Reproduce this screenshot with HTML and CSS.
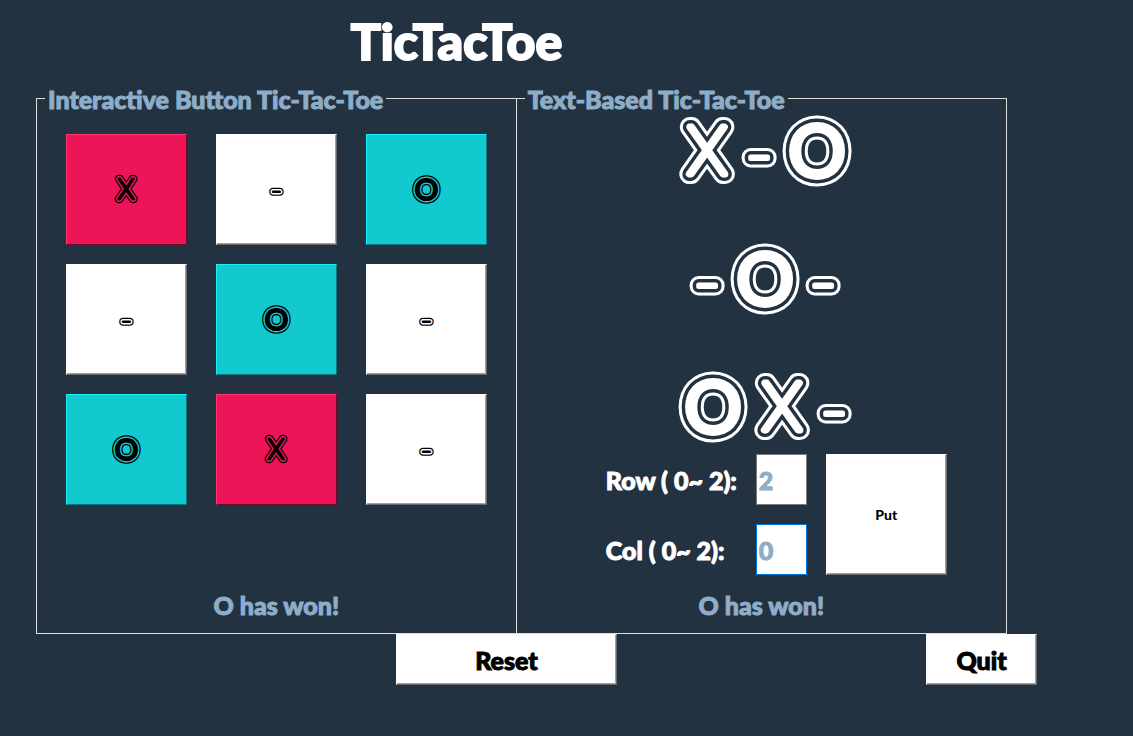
FILE: index.html
```html
<!DOCTYPE html>
<html lang="en">
<head>
<meta charset="utf-8">
<title>TicTacToe</title>
<link rel="stylesheet" href="styles.css">
</head>
<body>
<svg class="mark-defs" aria-hidden="true">
  <defs>
    <g id="inner-x"><text class="gap" x="29" y="58">X</text><text class="core" x="29" y="58">X</text></g>
    <g id="inner-o"><text class="gap" x="35" y="61">O</text><text class="core" x="35" y="61">O</text></g>
    <g id="inner-dash"><text class="gap" x="18" y="61">-</text><text class="core" x="18" y="61">-</text></g>
  </defs>
</svg>
<main class="page">
  <h1 class="title">TicTacToe</h1>
  <div class="boards">
    <fieldset class="frame frame-buttons">
      <legend>Interactive Button Tic-Tac-Toe</legend>
      <div class="grid">
        <button class="cell cell-x" type="button"><svg class="mark" viewBox="0 0 58 70"><text class="mark-x" x="29" y="58">X</text><use href="#inner-x" class="mark-x"/></svg></button>
        <button class="cell" type="button"><svg class="mark" viewBox="0 0 36 70"><text class="mark-dash" x="18" y="61">-</text><use href="#inner-dash" class="mark-dash"/></svg></button>
        <button class="cell cell-o" type="button"><svg class="mark" viewBox="0 0 70 70"><text class="mark-o" x="35" y="61">O</text><use href="#inner-o" class="mark-o"/></svg></button>
        <button class="cell" type="button"><svg class="mark" viewBox="0 0 36 70"><text class="mark-dash" x="18" y="61">-</text><use href="#inner-dash" class="mark-dash"/></svg></button>
        <button class="cell cell-o" type="button"><svg class="mark" viewBox="0 0 70 70"><text class="mark-o" x="35" y="61">O</text><use href="#inner-o" class="mark-o"/></svg></button>
        <button class="cell" type="button"><svg class="mark" viewBox="0 0 36 70"><text class="mark-dash" x="18" y="61">-</text><use href="#inner-dash" class="mark-dash"/></svg></button>
        <button class="cell cell-o" type="button"><svg class="mark" viewBox="0 0 70 70"><text class="mark-o" x="35" y="61">O</text><use href="#inner-o" class="mark-o"/></svg></button>
        <button class="cell cell-x" type="button"><svg class="mark" viewBox="0 0 58 70"><text class="mark-x" x="29" y="58">X</text><use href="#inner-x" class="mark-x"/></svg></button>
        <button class="cell" type="button"><svg class="mark" viewBox="0 0 36 70"><text class="mark-dash" x="18" y="61">-</text><use href="#inner-dash" class="mark-dash"/></svg></button>
      </div>
      <p class="status">O has won!</p>
    </fieldset>
    <fieldset class="frame frame-text">
      <legend>Text-Based Tic-Tac-Toe</legend>
      <div class="text-board">
        <div class="line">
          <svg class="mark" viewBox="0 0 58 70"><text class="mark-x" x="29" y="58">X</text><use href="#inner-x" class="mark-x"/></svg>
          <svg class="mark" viewBox="0 0 36 70"><text class="mark-dash" x="18" y="61">-</text><use href="#inner-dash" class="mark-dash"/></svg>
          <svg class="mark" viewBox="0 0 70 70"><text class="mark-o" x="35" y="61">O</text><use href="#inner-o" class="mark-o"/></svg>
        </div>
        <div class="line">
          <svg class="mark" viewBox="0 0 36 70"><text class="mark-dash" x="18" y="61">-</text><use href="#inner-dash" class="mark-dash"/></svg>
          <svg class="mark" viewBox="0 0 70 70"><text class="mark-o" x="35" y="61">O</text><use href="#inner-o" class="mark-o"/></svg>
          <svg class="mark" viewBox="0 0 36 70"><text class="mark-dash" x="18" y="61">-</text><use href="#inner-dash" class="mark-dash"/></svg>
        </div>
        <div class="line">
          <svg class="mark" viewBox="0 0 70 70"><text class="mark-o" x="35" y="61">O</text><use href="#inner-o" class="mark-o"/></svg>
          <svg class="mark" viewBox="0 0 58 70"><text class="mark-x" x="29" y="58">X</text><use href="#inner-x" class="mark-x"/></svg>
          <svg class="mark" viewBox="0 0 36 70"><text class="mark-dash" x="18" y="61">-</text><use href="#inner-dash" class="mark-dash"/></svg>
        </div>
      </div>
      <div class="controls">
        <div class="fields">
          <label for="row">Row ( 0~ 2):</label>
          <input id="row" type="text" value="2">
          <label for="col">Col ( 0~ 2):</label>
          <input id="col" class="active" type="text" value="0">
        </div>
        <button class="raised put" type="button">Put</button>
      </div>
      <p class="status">O has won!</p>
    </fieldset>
  </div>
  <div class="actions">
    <button class="raised reset" type="button">Reset</button>
    <button class="raised quit" type="button">Quit</button>
  </div>
</main>
</body>
</html>
```
FILE: styles.css
```css
* {
  box-sizing: border-box;
}

body {
  --bg: #223240;
  --accent: #8eadc8;
  margin: 0;
  background: var(--bg);
  color: #fff;
  font: 900 25px/28px Lato, "Noto Sans", sans-serif;
  -webkit-text-stroke: 1px currentColor;
}

.page {
  padding: 12px 126px 0 36px;
}

.title {
  margin: 0 130px 16px 0;
  font-size: 50px;
  line-height: 58px;
  font-weight: 900;
  text-align: center;
  -webkit-text-stroke-width: 2px;
}

.boards {
  display: flex;
}

.frame {
  display: flex;
  flex-direction: column;
  align-items: center;
  min-width: 0;
  margin: 0;
  border: 1px solid #dcdcdc;
}

.frame legend {
  padding: 2px 3px 0;
  color: var(--accent);
  line-height: 22px;
  white-space: nowrap;
}

.frame-buttons {
  flex: 480 1 0;
  padding: 24px 8px 14px;
}

.frame-text {
  flex: 491 1 0;
  padding: 6px 8px 14px;
  border-left: 0;
}

.grid {
  display: grid;
  grid-template-columns: repeat(3, 121px);
  grid-auto-rows: 111px;
  gap: 19px 29px;
}

.cell,
.raised {
  padding: 0;
  border: 1px solid;
  border-color: #fff #696969 #696969 #fff;
  box-shadow: inset -1px -1px #a0a0a0;
  background: #fff;
  color: #000;
  font: inherit;
  -webkit-text-stroke: 1px #000;
}

.cell {
  --gap: #fff;
  display: flex;
  align-items: center;
  justify-content: center;
}

.cell-x {
  --gap: #ed1558;
  background: #ed1558;
  border-color: #ff3574 #6a0927 #6a0927 #ff3574;
  box-shadow: none;
}

.cell-o {
  --gap: #13c9d0;
  background: #13c9d0;
  border-color: #17f1f9 #0b797d #0b797d #17f1f9;
  box-shadow: none;
}

.status {
  margin: auto 0 0;
  color: var(--accent);
}

.text-board {
  --gap: var(--bg);
  display: grid;
  gap: 58px;
  margin-left: 8px;
}

.line {
  display: flex;
  justify-content: center;
  gap: 5px;
}

.mark-defs {
  position: absolute;
  width: 0;
  height: 0;
}

.mark {
  display: block;
  height: 70px;
  overflow: visible;
  fill: currentColor;
  stroke: currentColor;
  stroke-linejoin: round;
  font-family: Inter, sans-serif;
  font-weight: 100;
  text-anchor: middle;
}

.cell .mark {
  height: 29px;
}

.mark-x {
  font-size: 64px;
  stroke-width: 20px;
  --gap-width: 14px;
  --core-width: 7px;
}

.mark-o {
  font-family: Lato, sans-serif;
  font-size: 72px;
  font-weight: 400;
  stroke-width: 18px;
  --gap-width: 12px;
  --core-width: 5px;
}

.mark-dash {
  font-size: 62px;
  stroke-width: 18px;
  --gap-width: 12px;
  --core-width: 5px;
}

.gap {
  fill: var(--gap);
  stroke: var(--gap);
  stroke-width: var(--gap-width);
}

.core {
  stroke-width: var(--core-width);
}

.controls {
  display: flex;
  gap: 19px;
  margin: 12px 0 16px 30px;
}

.fields {
  display: grid;
  grid-template-columns: 150px 51px;
  gap: 19px 0;
  align-items: center;
}

.fields label {
  white-space: nowrap;
}

.fields input {
  width: 51px;
  height: 51px;
  padding: 0 2px;
  border: 1px solid #7a7a7a;
  border-radius: 0;
  outline: 0;
  background: #fff;
  color: var(--accent);
  font: inherit;
  -webkit-text-stroke: 1px var(--accent);
}

.fields input.active {
  border-color: #0078d7;
}

.put {
  width: 121px;
  height: 121px;
  font-size: 14px;
  -webkit-text-stroke-width: 0;
}

.actions {
  display: flex;
  justify-content: space-between;
  margin-right: -30px;
  padding-left: 360px;
}

.reset {
  width: 221px;
  height: 51px;
}

.quit {
  width: 111px;
  height: 51px;
}
```
